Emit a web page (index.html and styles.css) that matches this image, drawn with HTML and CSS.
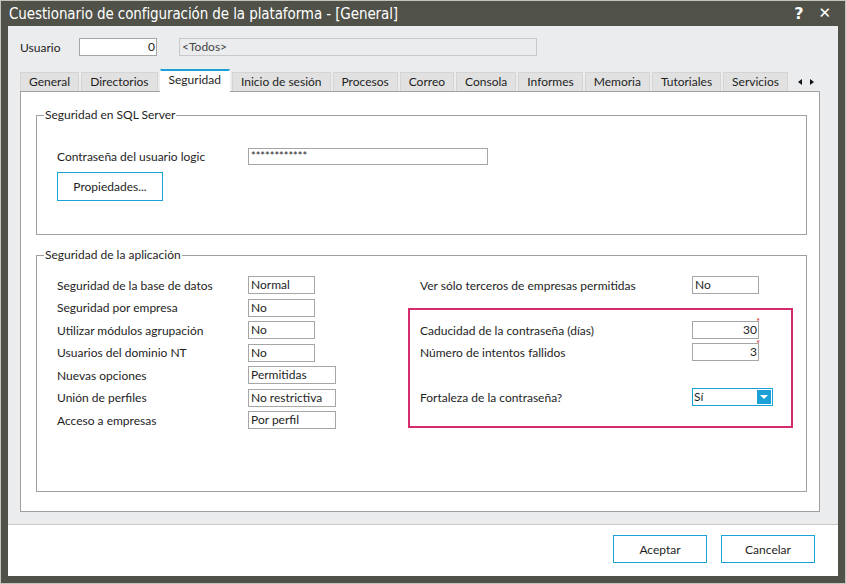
FILE: index.html
```html
<!DOCTYPE html>
<html lang="es">
<head>
<meta charset="utf-8">
<title>Cuestionario de configuración de la plataforma</title>
<link rel="stylesheet" href="styles.css">
</head>
<body>
<div class="window">
  <div class="titlebar">
    <span class="title">Cuestionario de configuración de la plataforma - [General]</span>
    <span class="title-btns"><span class="help">?</span><span class="close">&#x2715;</span></span>
  </div>
  <div class="client">
    <div class="main">
      <div class="user-row">
        <span class="user-label">Usuario</span>
        <span class="field user-id">0</span>
        <span class="field user-name">&lt;Todos&gt;</span>
      </div>
      <div class="tabs">
        <span class="tab">General</span>
        <span class="tab">Directorios</span>
        <span class="tab active">Seguridad</span>
        <span class="tab">Inicio de sesión</span>
        <span class="tab">Procesos</span>
        <span class="tab">Correo</span>
        <span class="tab">Consola</span>
        <span class="tab">Informes</span>
        <span class="tab">Memoria</span>
        <span class="tab">Tutoriales</span>
        <span class="tab">Servicios</span>
        <span class="tab-arrows"><span class="arrow left"></span><span class="arrow right"></span></span>
      </div>
      <div class="panel">
        <fieldset class="group sql">
          <legend>Seguridad en SQL Server</legend>
          <div class="row">
            <span class="label">Contraseña del usuario logic</span>
            <span class="field pwd">************</span>
          </div>
          <button class="btn props">Propiedades...</button>
        </fieldset>
        <fieldset class="group app">
          <legend>Seguridad de la aplicación</legend>
          <div class="cols">
            <div class="col-left">
              <div class="row"><span class="label">Seguridad de la base de datos</span><span class="field w1">Normal</span></div>
              <div class="row"><span class="label">Seguridad por empresa</span><span class="field w1">No</span></div>
              <div class="row"><span class="label">Utilizar módulos agrupación</span><span class="field w1">No</span></div>
              <div class="row"><span class="label">Usuarios del dominio NT</span><span class="field w1">No</span></div>
              <div class="row"><span class="label">Nuevas opciones</span><span class="field w2">Permitidas</span></div>
              <div class="row"><span class="label">Unión de perfiles</span><span class="field w2">No restrictiva</span></div>
              <div class="row"><span class="label">Acceso a empresas</span><span class="field w2">Por perfil</span></div>
            </div>
            <div class="col-right">
              <div class="row rrow"><span class="label rlabel">Ver sólo terceros de empresas permitidas</span><span class="field w1">No</span></div>
              <div class="highlight">
                <div class="row rrow"><span class="label rlabel">Caducidad de la contraseña (días)</span><span class="field w1 num">30<span class="req">*</span></span></div>
                <div class="row rrow"><span class="label rlabel">Número de intentos fallidos</span><span class="field w1 num">3<span class="req">*</span></span></div>
                <div class="row rrow combo-row"><span class="label rlabel">Fortaleza de la contraseña?</span><span class="combo"><span class="combo-text">Sí</span><span class="combo-btn"></span></span></div>
              </div>
            </div>
          </div>
        </fieldset>
      </div>
    </div>
    <div class="footer">
      <button class="btn foot">Aceptar</button>
      <button class="btn foot">Cancelar</button>
    </div>
  </div>
</div>
</body>
</html>
```

FILE: styles.css
```css
* { box-sizing: border-box; }
html, body { margin: 0; padding: 0; }
body {
  width: 846px; height: 584px; overflow: hidden;
  font-family: "Lato", "Open Sans", sans-serif;
  font-size: 12px; color: #1e1e1e;
  background: #ffffff;
}
.window {
  width: 846px; height: 584px;
  border: 1px solid #c4c4bc;
  background: #505148;
  padding: 0 7px 7px 7px;
  display: flex; flex-direction: column;
}
.titlebar {
  height: 25px; flex: none;
  display: flex; align-items: center; justify-content: space-between;
  color: #ffffff;
}
.title {
  font-family: "DejaVu Sans Condensed", "DejaVu Sans", sans-serif;
  font-stretch: condensed;
  font-size: 15px; padding-left: 1px; padding-top: 1px;
  letter-spacing: -0.1px;
}
.title-btns { display: flex; gap: 15px; padding-right: 7px; font-size: 16px; font-family: "DejaVu Sans", sans-serif; }
.help { font-weight: bold; }
.close { font-size: 15px; }
.client {
  flex: 1; display: flex; flex-direction: column;
  background: #ffffff;
}
.main {
  height: 499px; flex: none;
  background: #ebecee;
  border-bottom: 1px solid #c8c9c4;
  padding: 12px 0 0 12px;
}
.user-row { display: flex; align-items: center; height: 18px; }
.user-label { width: 59px; }
.field {
  display: inline-block; height: 18px; line-height: 16px;
  border: 1px solid #a6a6a6; background: #fff;
  padding: 0 2px; white-space: nowrap; position: relative;
}
.user-id { width: 78px; text-align: right; padding-right: 1px; }
.user-name { width: 358px; margin-left: 22px; background: #ebecee; border-color: #c9c9c9; color: #444; }
.tabs {
  display: flex; align-items: flex-end; gap: 2px;
  height: 22px; margin-top: 13px;
}
.tab {
  height: 19px; line-height: 18px;
  padding: 0 8px;
  background: #e1e1e1; border: 1px solid #d4d4d4; border-bottom: none;
  color: #1e1e1e; white-space: nowrap;
}
.tab.active {
  line-height: 18px;
  background: #ffffff; border-color: #ffffff; border-top: 2px solid #1ba1d6;
  position: relative; z-index: 2; margin-bottom: -1px; height: 23px;
}
.tab-arrows { display: flex; gap: 8px; align-items: center; height: 19px; margin-left: 8px; }
.arrow { width: 0; height: 0; border-top: 3.5px solid transparent; border-bottom: 3.5px solid transparent; }
.arrow.left { border-right: 4px solid #111; }
.arrow.right { border-left: 4px solid #111; }
.panel {
  width: 800px; height: 421px;
  background: #ffffff; border: 1px solid #a0a0a0;
  padding: 16px 0 0 15px;
  position: relative; z-index: 1;
}
.group {
  margin: 0; width: 771px;
  border: 1px solid #a0a0a0;
  padding: 0 0 0 20px;
}
.group legend {
  padding: 0 1px; margin-left: -13px; line-height: 14px;
}
.sql { height: 127px; }
.sql .row { margin-top: 25px; }
.row { display: flex; align-items: center; height: 18px; }
.label { width: 191px; flex: none; white-space: nowrap; }
.pwd { width: 240px; height: 17px; line-height: 14px; font-size: 11px; }
.btn {
  font-family: inherit; font-size: inherit; color: #1e1e1e;
  background: #ffffff; border: 1px solid #1ba1d6;
  padding: 0; cursor: default;
}
.props { margin-top: 7px; width: 106px; height: 29px; }
.app { height: 244px; margin-top: 13px; }
.cols { display: flex; margin-top: 14px; }
.col-left { width: 351px; display: flex; flex-direction: column; gap: 4.5px; }
.w1 { width: 67px; }
.w2 { width: 88px; }
.col-right { width: 385px; }
.rrow .rlabel { width: 272px; }
.col-right > .rrow { padding-left: 12px; }
.highlight {
  margin-top: 14px; height: 120px;
  border: 2px solid #d42a6e;
  padding: 11px 0 0 10px;
  display: flex; flex-direction: column; gap: 4px;
}
.num { text-align: right; padding-right: 1px; }
.req { position: absolute; right: -2px; top: -5px; color: #e02020; font-size: 9px; line-height: 9px; }
.combo-row { margin-top: 23px; }
.combo {
  display: flex; width: 81px; height: 18px;
  border: 1px solid #1ba1d6; background: #fff;
}
.combo-text { flex: 1; padding-left: 1px; line-height: 16px; }
.combo-btn {
  width: 14px; height: 14px; margin: 1px; background: #1ba1d6; position: relative;
}
.combo-btn::after {
  content: ""; position: absolute; left: 3px; top: 5px;
  border-left: 4px solid transparent; border-right: 4px solid transparent; border-top: 4px solid #fff;
}
.footer {
  flex: 1; display: flex; justify-content: flex-end; align-items: flex-start;
  padding: 10px 23px 0 0; gap: 14px;
}
.foot { width: 94px; height: 28px; }
```
